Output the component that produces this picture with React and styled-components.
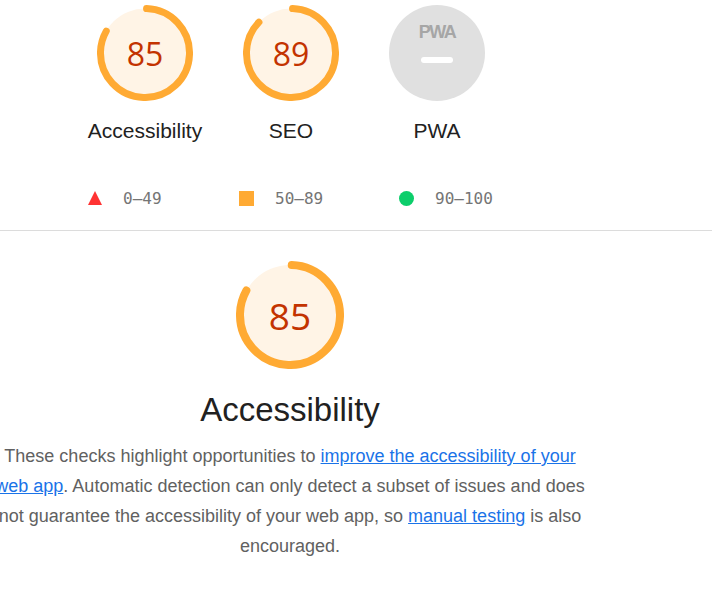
import React from 'react';
import styled, { createGlobalStyle } from 'styled-components';

const GlobalStyle = createGlobalStyle`
    html, body {
        margin: 0;
        padding: 0;
        background: #fff;
        overflow: hidden;
    }
    body {
        font-family: "Liberation Sans", Arial, sans-serif;
    }
`;

const Page = styled.div`
    width: 712px;
    height: 609px;
    overflow: hidden;
`;

const GaugeRow = styled.div`
    display: flex;
    padding: 5px 0 0 72px;
`;

const GaugeItem = styled.div`
    width: 146px;
    display: flex;
    flex-direction: column;
    align-items: center;
`;

const GaugeLabel = styled.div`
    margin-top: 18px;
    font-size: 21px;
    line-height: 24px;
    color: #212121;
`;

const Legend = styled.div`
    display: flex;
    align-items: center;
    padding: 45px 0 0 88px;
    height: 20px;
`;

const LegendItem = styled.div`
    display: flex;
    align-items: center;
    gap: 21px;
    width: ${(p) => p.width}px;
    font-family: "DejaVu Sans Mono", "Liberation Mono", monospace;
    font-size: 16px;
    color: #757575;
`;

const Triangle = styled.span`
    width: 0;
    height: 0;
    border-left: 7.5px solid transparent;
    border-right: 7.5px solid transparent;
    border-bottom: 14px solid #ff3333;
`;

const Square = styled.span`
    width: 15px;
    height: 15px;
    background: #ffaa33;
`;

const Dot = styled.span`
    width: 15px;
    height: 15px;
    border-radius: 50%;
    background: #0cce6b;
`;

const Divider = styled.hr`
    margin: 22px 0 0;
    border: 0;
    border-top: 1px solid #dcdcdc;
`;

const Category = styled.section`
    width: 600px;
    margin: 30px 0 0 -10px;
    display: flex;
    flex-direction: column;
    align-items: center;
`;

const Title = styled.h2`
    margin: 22px 0 0;
    font-weight: 400;
    font-size: 33px;
    line-height: 38px;
    color: #212121;
`;

const Description = styled.p`
    margin: 12px 0 0;
    font-size: 18px;
    line-height: 30px;
    color: #616161;
    text-align: center;
`;

const Link = styled.a`
    color: #1a73e8;
    text-decoration: underline;
`;

const GaugeWrap = styled.div`
    position: relative;
    width: ${(p) => p.size}px;
    height: ${(p) => p.size}px;
`;

const GaugeNumber = styled.div`
    position: absolute;
    inset: 0;
    display: flex;
    align-items: center;
    justify-content: center;
    font-family: "Open Sans", "Noto Sans", sans-serif;
    font-size: ${(p) => p.fs}px;
    color: #c33300;
`;

const Gauge = ({ score, size, stroke, fs }) => {
    const r = (size - stroke) / 2;
    const c = 2 * Math.PI * r;
    return (
        <GaugeWrap size={size}>
            <svg width={size} height={size} viewBox={`0 0 ${size} ${size}`}>
                <circle cx={size / 2} cy={size / 2} r={r} fill="#fff4e6" />
                <circle
                    cx={size / 2}
                    cy={size / 2}
                    r={r}
                    fill="none"
                    stroke="#ffaa33"
                    strokeWidth={stroke}
                    strokeLinecap="round"
                    strokeDasharray={`${(score / 100) * c - stroke} ${c}`}
                    transform={`rotate(-88 ${size / 2} ${size / 2})`}
                />
            </svg>
            <GaugeNumber fs={fs}>{score}</GaugeNumber>
        </GaugeWrap>
    );
};

const PwaBadge = styled.div`
    width: 96px;
    height: 96px;
    border-radius: 50%;
    background: #e0e0e0;
    display: flex;
    flex-direction: column;
    align-items: center;
`;

const PwaText = styled.span`
    margin-top: 17px;
    font-family: "Liberation Sans", Arial, sans-serif;
    font-weight: 700;
    font-size: 18px;
    line-height: 20px;
    letter-spacing: -1.5px;
    color: #a6a6a6;
`;

const PwaDash = styled.span`
    margin-top: 15px;
    width: 32px;
    height: 6px;
    border-radius: 3px;
    background: #fff;
`;

export default function App() {
    return (
        <Page>
            <GlobalStyle />
            <GaugeRow>
                <GaugeItem>
                    <Gauge score={85} size={96} stroke={7} fs={32} />
                    <GaugeLabel>Accessibility</GaugeLabel>
                </GaugeItem>
                <GaugeItem>
                    <Gauge score={89} size={96} stroke={7} fs={32} />
                    <GaugeLabel>SEO</GaugeLabel>
                </GaugeItem>
                <GaugeItem>
                    <PwaBadge>
                        <PwaText>PWA</PwaText>
                        <PwaDash />
                    </PwaBadge>
                    <GaugeLabel>PWA</GaugeLabel>
                </GaugeItem>
            </GaugeRow>

            <Legend>
                <LegendItem width={151}>
                    <Triangle />
                    0–49
                </LegendItem>
                <LegendItem width={160}>
                    <Square />
                    50–89
                </LegendItem>
                <LegendItem width={140}>
                    <Dot />
                    90–100
                </LegendItem>
            </Legend>

            <Divider />

            <Category>
                <Gauge score={85} size={108} stroke={8} fs={37} />
                <Title>Accessibility</Title>
                <Description>
                    These checks highlight opportunities to{' '}
                    <Link href="#">improve the accessibility of your web app</Link>.
                    Automatic detection can only detect a subset of issues and does
                    not guarantee the accessibility of your web app, so{' '}
                    <Link href="#">manual testing</Link> is also encouraged.
                </Description>
            </Category>
        </Page>
    );
}
